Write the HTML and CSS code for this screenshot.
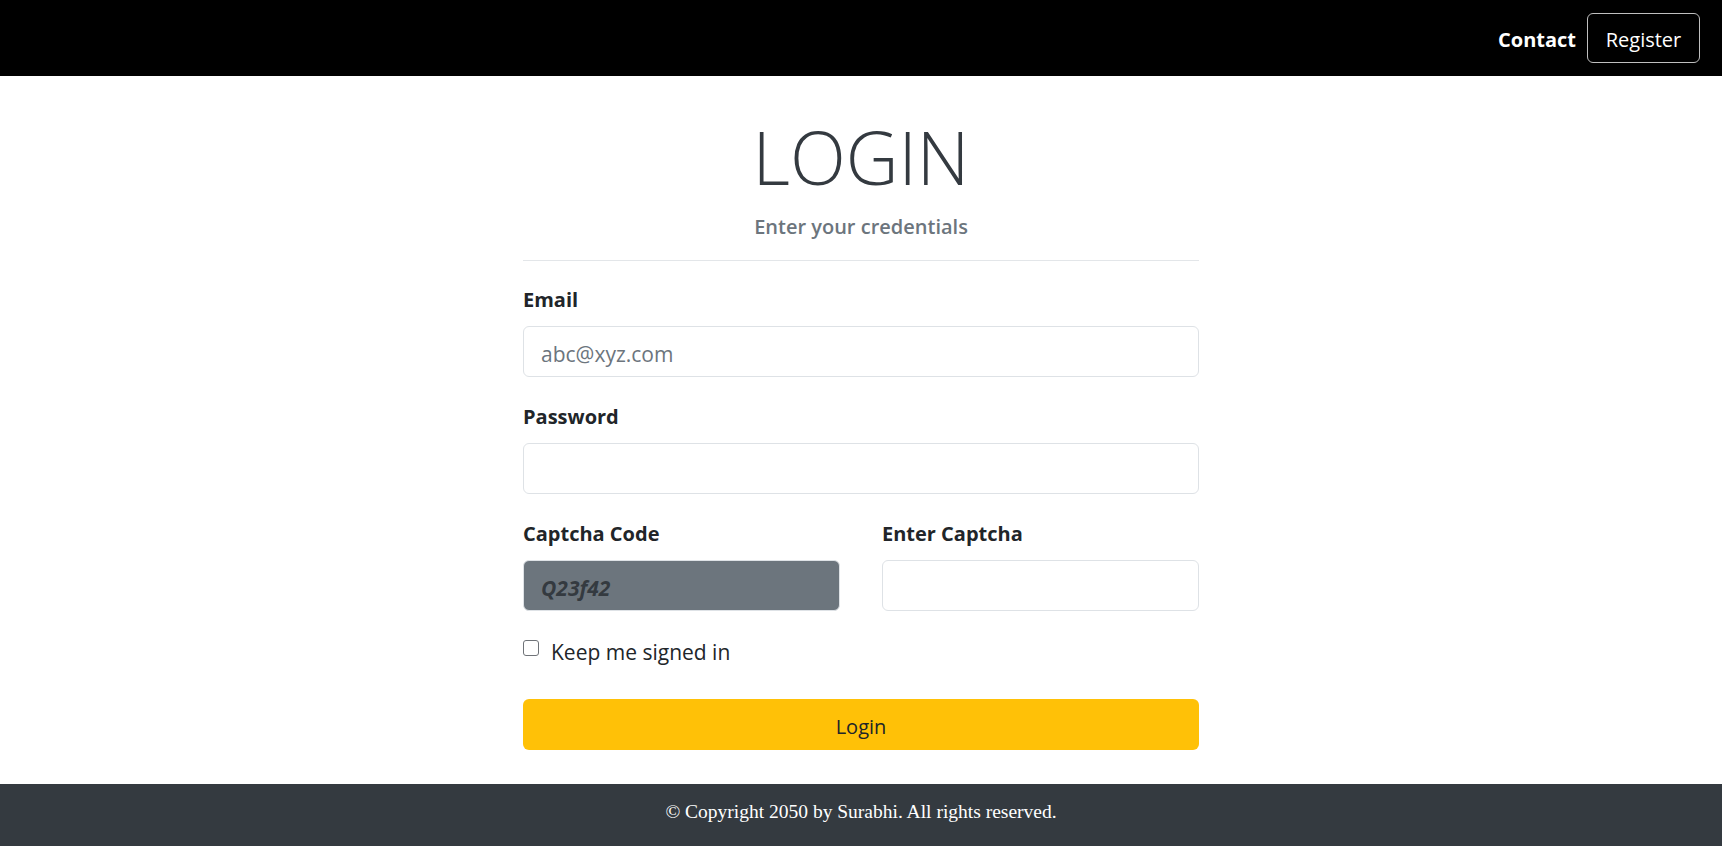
FILE: index.html
```html
<!DOCTYPE html>
<html lang="en">
<head>
<meta charset="utf-8">
<title>Login</title>
<link rel="stylesheet" href="styles.css">
</head>
<body>
<header class="navbar">
  <nav class="nav-links">
    <a class="nav-contact" href="#">Contact</a>
    <a class="btn-register" href="#">Register</a>
  </nav>
</header>
<main class="page">
  <section class="login">
    <h1 class="title">LOGIN</h1>
    <h5 class="subtitle">Enter your credentials</h5>
    <hr class="divider">
    <form class="form">
      <div class="field">
        <label class="label" for="email">Email</label>
        <input class="input" id="email" type="email" placeholder="abc@xyz.com">
      </div>
      <div class="field">
        <label class="label" for="password">Password</label>
        <input class="input" id="password" type="password">
      </div>
      <div class="captcha-row">
        <div class="field">
          <span class="label">Captcha Code</span>
          <div class="captcha-code">Q23f42</div>
        </div>
        <div class="field">
          <label class="label" for="captcha">Enter Captcha</label>
          <input class="input" id="captcha" type="text">
        </div>
      </div>
      <label class="check">
        <span class="check-box"></span>
        <span class="check-text">Keep me signed in</span>
      </label>
      <button class="btn-login" type="button">Login</button>
    </form>
  </section>
</main>
<footer class="footer">
  <p class="footer-text">© Copyright 2050 by Surabhi. All rights reserved.</p>
</footer>
</body>
</html>
```
FILE: styles.css
```css
* { box-sizing: border-box; }

html, body { height: 100%; }

body {
  margin: 0;
  display: flex;
  flex-direction: column;
  font-family: "Open Sans", "Noto Sans", sans-serif;
  color: #212529;
  background: #fff;
}

.navbar {
  height: 76px;
  background: #000;
  display: flex;
  justify-content: flex-end;
  align-items: center;
  padding-right: 22px;
  flex-shrink: 0;
}

.nav-links {
  display: flex;
  align-items: center;
  gap: 11px;
}

.nav-contact {
  color: #fff;
  font-weight: 700;
  font-size: 20px;
  padding-top: 2px;
  text-decoration: none;
}

.btn-register {
  display: flex;
  align-items: center;
  justify-content: center;
  width: 113px;
  height: 50px;
  padding-top: 2px;
  border: 1px solid #bfbfbf;
  border-radius: 6px;
  color: #fff;
  font-size: 20px;
  text-decoration: none;
}

.page {
  flex: 1;
  display: flex;
  justify-content: center;
}

.login {
  width: 676px;
}

.title {
  margin: 33px 0 0;
  font-size: 73px;
  font-weight: 300;
  line-height: 95px;
  text-align: center;
  color: #343a40;
}

.subtitle {
  margin: 10px 0 0;
  font-size: 20px;
  font-weight: 600;
  line-height: 26px;
  text-align: center;
  color: #6c757d;
}

.divider {
  margin: 20px 0 0;
  border: 0;
  border-top: 1px solid #e3e6e9;
}

.form {
  padding-top: 24px;
  display: flex;
  flex-direction: column;
}

.field {
  display: flex;
  flex-direction: column;
  margin-bottom: 25px;
}

.label {
  font-size: 20px;
  font-weight: 700;
  line-height: 30px;
  margin-bottom: 11px;
  color: #212529;
}

.input {
  height: 51px;
  border: 1px solid #dee2e6;
  border-radius: 6px;
  padding: 4px 17px 0;
  font-family: inherit;
  font-size: 21px;
  color: #212529;
  background: #fff;
}

.input::placeholder { color: #6c757d; }

.captcha-row {
  display: grid;
  grid-template-columns: 1fr 1fr;
  column-gap: 42px;
}

.captcha-code {
  height: 51px;
  display: flex;
  align-items: center;
  padding: 5px 17px 0;
  background: #6c757d;
  border: 1px solid #dee2e6;
  border-radius: 6px;
  font-size: 21px;
  font-weight: 700;
  font-style: italic;
  color: #343a40;
}

.check {
  display: flex;
  align-items: flex-start;
  gap: 12px;
  margin-top: 1px;
  line-height: 30px;
}

.check-box {
  width: 16px;
  height: 16px;
  margin-top: 3px;
  border: 1px solid #6f7378;
  border-radius: 3px;
  background: #fff;
}

.check-text {
  font-size: 21px;
  color: #212529;
}

.btn-login {
  margin-top: 32px;
  height: 51px;
  padding-top: 5px;
  border: 0;
  border-radius: 6px;
  background: #ffc107;
  color: #212529;
  font-family: inherit;
  font-size: 20px;
}

.footer {
  height: 62px;
  flex-shrink: 0;
  background: #343a40;
  display: flex;
  align-items: center;
  justify-content: center;
  padding-bottom: 7px;
}

.footer-text {
  margin: 0;
  color: #fff;
  font-family: "Liberation Serif", serif;
  font-size: 19.5px;
}
```
